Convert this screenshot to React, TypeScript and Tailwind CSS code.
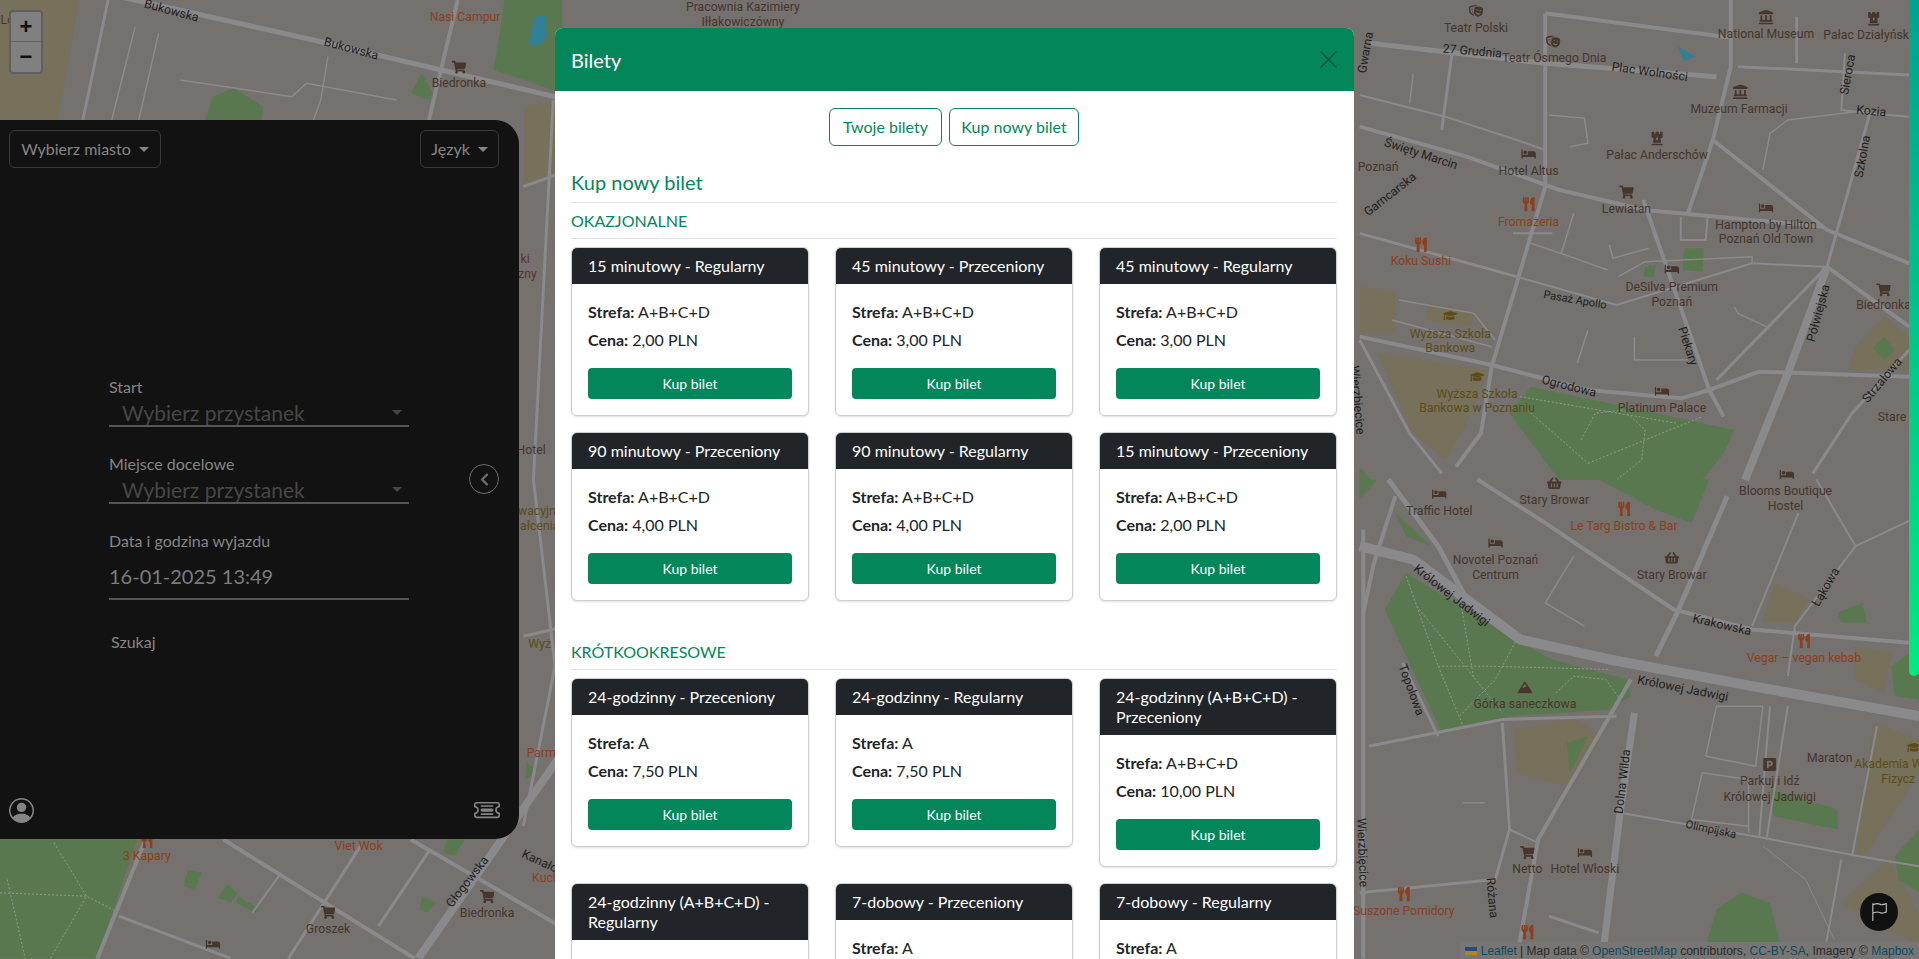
import {
  BsChevronLeft,
  BsFlag,
  BsPersonCircle,
  BsTicketDetailed,
} from "react-icons/bs";
import {
  FaBed,
  FaGraduationCap,
  FaLandmark,
  FaMountain,
  FaShoppingBasket,
  FaShoppingCart,
  FaTheaterMasks,
  FaUtensils,
  FaChessRook,
  FaParking,
} from "react-icons/fa";

const GROUND = "#74716e";
const ROAD = "#8a8a8c";
const PARK = "#5a7850";
const OLIVE = "#77705a";
const BROWN = "#47362c";
const RED = "#8c3f1e";
const MUSTARD = "#5c4d18";

type Layer = {
  transform: string;
  parks: string[];
  zones: string[];
  roads: [string, number][];
  paths?: string[];
};

// coordinates of each layer are read off the zoomed crops of the map
const layers: Layer[] = [
  {
    transform: "translate(1111,0) scale(0.2915,0.2725)",
    parks: [
      "420,1240 480,1160 1050,1290 1020,1360 960,1440 560,1440",
      "910,745 965,745 960,815 905,810",
      "800,800 830,795 825,830 795,830",
      "1470,1010 1500,1050 1470,1080 1440,1045",
      "0,1400 30,1440 0,1440",
    ],
    zones: [
      "0,860 100,880 100,1000 0,1000",
      "190,910 320,940 310,980 190,960",
      "50,1060 360,1110 300,1270 240,1380 150,1300",
      "1370,1110 1390,1040 1470,950 1540,1010 1540,1110",
    ],
    paths: [
      "620,1320 660,1240 740,1230 800,1290 790,1380 720,1440",
      "640,1390 960,1250",
      "450,1190 890,1270",
      "470,1230 640,1390",
    ],
    roads: [
      ["0,380 300,470 560,570 800,630 1100,660 1300,680", 4],
      ["0,700 440,830", 3],
      ["440,830 720,915 1100,790 1300,800", 2],
      ["0,1010 370,1095 640,1170 900,1195 980,1170 1120,1115 1540,1130", 4],
      ["520,40 520,560 440,850 370,1100 340,1300 270,1400", 4],
      ["1040,0 1040,200 990,420 920,640", 4],
      ["520,40 1020,110 1040,110", 4],
      ["1060,200 1540,225", 3],
      ["30,130 520,190 1000,230", 5],
      ["260,150 230,390", 3],
      ["795,600 980,1170 1020,1250", 4],
      ["990,420 1310,690 1540,790", 4],
      ["1310,800 1000,1140", 3],
      ["1310,800 1200,1120 1080,1440", 8],
      ["1430,340 1310,800", 3],
      ["1310,800 1540,980", 4],
      ["1540,1050 1380,1240 1270,1420", 3],
      ["0,1020 140,1300 230,1420", 3],
      ["1225,50 1225,190", 3],
      ["1360,160 1350,330 1430,340 1540,350", 2],
      ["150,220 140,310", 1.5],
      ["0,285 240,350 440,420 520,450", 2],
      ["600,640 565,760", 1.5],
      ["480,730 590,770 695,810", 1.5],
      ["700,735 710,775 810,745", 1.5],
      ["1130,510 1150,400 1200,360 1430,330", 1.5],
      ["430,700 540,700", 2],
      ["770,1010 770,1080 920,1080", 1.5],
      ["640,990 610,1090", 1.5],
      ["530,345 630,355 640,430 590,440", 1.5],
      ["900,650 900,720 970,720 975,650", 2],
      ["725,830 800,785 1100,770 1100,790", 1.5],
      ["110,900 320,940 380,1020", 1.5],
      ["90,960 370,1040", 1.5],
      ["1050,920 1060,940 1140,980", 1.5],
    ],
  },
  {
    transform: "translate(1111,392) scale(0.2915,0.2725)",
    parks: [
      "70,390 130,280 400,460 540,540 750,600 760,650 700,690 420,710 230,760 130,530",
      "670,0 980,0 930,130 830,90",
      "970,1400 1000,1290 1070,1240 1150,1270 1180,1400",
      "1150,930 1340,990 1340,1050 1160,1010",
      "1500,1130 1568,1050 1568,1240 1510,1200",
      "1340,400 1410,370 1420,430 1350,430",
      "100,100 200,200 130,170",
      "580,790 640,770 590,880",
      "1490,560 1568,500 1568,660 1500,650",
      "0,0 50,0 0,60",
    ],
    zones: [
      "430,750 600,720 680,770 590,920 440,880",
      "1160,310 1260,360 1220,430 1130,430",
      "1390,500 1490,520 1470,640 1390,600",
      "1440,730 1568,780 1568,880 1420,1120 1390,1130",
      "1350,1270 1480,1140 1568,1300 1568,1400",
    ],
    paths: [
      "130,290 220,560 290,740",
      "160,380 340,620 400,700",
      "220,560 360,560 700,570",
      "280,350 320,600",
      "280,710 380,600 440,480",
      "550,640 600,590 690,600 730,660",
    ],
    roads: [
      ["0,200 150,240 300,360 450,480 700,540 1100,620 1568,710", 10],
      ["80,0 220,200 300,360", 5],
      ["10,150 10,1437", 4],
      ["100,50 40,250 10,400", 4],
      ["330,0 520,130 880,390 1100,450 1540,490", 4],
      ["1030,50 890,400 830,530", 5],
      ["1280,0 1390,200 1568,110", 2],
      ["1390,200 1220,440 1200,590", 2],
      ["1230,100 1100,440", 2],
      ["770,700 730,1000 680,1437", 7],
      ["760,600 500,1080 440,1437", 4],
      ["25,800 400,720 720,710", 3],
      ["400,730 420,1050 380,1200 0,1240", 3],
      ["420,1050 500,1090", 2],
      ["730,1000 1130,1075 1400,1130 1568,1160", 2],
      ["1350,1140 1300,1437", 2],
      ["1130,1100 1250,1200 1330,1380", 1],
      ["120,550 220,770", 3],
      ["970,830 1000,680 1130,680 1110,860 970,830", 1.5],
      ["960,880 1090,900 1090,1060", 1.5],
      ["960,880 930,1020 1090,1040", 1.5],
      ["1150,680 1120,1070", 2],
      ["1200,680 1140,1080", 2],
      ["530,1310 670,1360", 3],
      ["350,970 290,970", 1.5],
      ["600,230 520,370 630,440", 1.5],
      ["1450,740 1380,1130", 2],
    ],
  },
  {
    transform: "translate(0,0) scale(0.2945,0.2725)",
    parks: [
      "570,360 590,290 650,265 730,320 725,360",
      "1370,210 1400,0 1560,0 1560,280",
      "1140,280 1170,220 1200,280 1190,300",
    ],
    zones: ["0,0 220,0 160,360 0,360", "1455,320 1554,300 1554,510 1455,560"],
    roads: [
      ["290,-20 870,120 1560,295", 5],
      ["300,0 230,360", 3],
      ["1270,0 1190,360", 4],
      ["375,80 310,360", 1.5],
      ["440,100 385,360", 1.5],
      ["500,240 810,290 850,250 1100,300", 1.5],
      ["910,170 890,300 870,360", 1.5],
      ["1452,560 1554,520", 3],
      ["1535,300 1480,1440", 3],
    ],
  },
  {
    transform: "translate(0,392) scale(0.2945,0.2725)",
    parks: [
      "0,1080 380,1080 270,1437 0,1437",
      "520,1170 560,1180 540,1230 510,1220",
      "630,1215 660,1240 640,1270 605,1255",
      "660,1250 720,1290 710,1300 655,1270",
      "1170,1250 1210,1270 1185,1300 1165,1290",
      "1240,1080 1290,1080 1260,1130 1230,1120",
      "1460,850 1490,870 1460,900",
    ],
    zones: ["180,1080 400,1080 340,1200 200,1170"],
    paths: ["150,1090 240,1250 140,1437", "0,1240 240,1250 330,1300", "20,1200 70,1437"],
    roads: [
      ["400,1090 270,1437", 4],
      ["330,1310 640,1437", 3],
      ["620,1080 1150,1437", 4],
      ["1190,1115 1050,1340", 3],
      ["1000,1100 800,1437", 3],
      ["780,1180 700,1300", 2],
      ["1554,830 1160,1437", 8],
      ["1140,1080 1554,1340", 4],
      ["1480,0 1540,560 1452,1040", 3],
      ["1452,470 1554,445", 3],
    ],
  },
];

type Label = [string, number, number, string?, number?, number?];

const labels: Label[] = [
  ["Lo", 6, 20],
  ["Nasi Campur", 380, 17, RED],
  ["Biedronka", 375, 71],
  ["Bukowska", 140, 12, "#1f1f1f", 15],
  ["Bukowska", 287, 43, "#1f1f1f", 15],
  ["Pracownia Kazimiery", 607, 9],
  ["Iłłakowiczówny", 607, 21],
  ["ki", 429, 215, "#5c2f3c"],
  ["zny", 431, 227, "#5c2f3c"],
  ["Hotel", 434, 371],
  ["wacyjny", 441, 421, MUSTARD],
  ["ałcenia", 441, 433, MUSTARD],
  ["Wyż", 441, 530, MUSTARD],
  ["Parma", 445, 619, RED],
  ["Viet Wok", 293, 695, RED],
  ["3 Kapary", 120, 703, RED],
  ["Kanałowa", 447, 710, "#1f1f1f", 25],
  ["Głogowska", 382, 724, "#1f1f1f", -52],
  ["Kuch", 446, 721, RED],
  ["Biedronka", 398, 750],
  ["Groszek", 268, 763],
  ["Gwarna", 1116, 46, "#1f1f1f", -80],
  ["Teatr Polski", 1206, 26],
  ["27 Grudnia", 1203, 45, "#1f1f1f", 5],
  ["Teatr Ósmego Dnia", 1270, 51],
  ["Plac Wolności", 1348, 62, "#1f1f1f", 8],
  ["National Museum", 1443, 31],
  ["Pałac Działyński", 1526, 32],
  ["Muzeum Farmacji", 1421, 92],
  ["Sieroca", 1510, 64, "#1f1f1f", -80],
  ["Kozia", 1529, 94, "#1f1f1f", 5],
  ["Szkolna", 1522, 131, "#1f1f1f", -80],
  ["Pałac Anderschów", 1354, 130],
  ["Hotel Altus", 1249, 143],
  ["Święty Marcin", 1161, 129, "#1f1f1f", 18],
  ["Poznań", 1126, 140],
  ["Garncarska", 1136, 162, "#1f1f1f", -38],
  ["Lewiatan", 1329, 174],
  ["Fromażeria", 1249, 185, RED],
  ["Koku Sushi", 1161, 217, RED],
  ["Hampton by Hilton", 1443, 187],
  ["Poznań Old Town", 1443, 199],
  ["DeSilva Premium", 1366, 238],
  ["Poznań", 1366, 250],
  ["Pasaż Apollo", 1287, 248, "#1f1f1f", 10, 9],
  ["Półwiejska", 1486, 259, "#1f1f1f", -75],
  ["Biedronka", 1539, 253],
  ["Wyższa Szkoła", 1185, 276, MUSTARD],
  ["Bankowa", 1185, 288, MUSTARD],
  ["Wyższa Szkoła", 1207, 325, MUSTARD],
  ["Bankowa w Poznaniu", 1207, 337, MUSTARD],
  ["Ogrodowa", 1282, 319, "#1f1f1f", 14],
  ["Piekary", 1379, 286, "#1f1f1f", 72],
  ["Platinum Palace", 1358, 337],
  ["Strzałowa", 1538, 314, "#1f1f1f", -50],
  ["Stare", 1546, 344],
  ["Stary Browar", 1270, 412],
  ["Blooms Boutique", 1459, 405],
  ["Hostel", 1459, 417],
  ["Traffic Hotel", 1176, 421],
  ["Le Targ Bistro & Bar", 1327, 433, RED],
  ["Novotel Poznań", 1222, 461],
  ["Centrum", 1222, 473],
  ["Stary Browar", 1366, 473],
  ["Królowej Jadwigi", 1186, 490, "#1f1f1f", 38],
  ["Krakowska", 1407, 514, "#1f1f1f", 13],
  ["Łąkowa", 1492, 483, "#1f1f1f", -60],
  ["Vegar – vegan kebab", 1474, 541, RED],
  ["Królowej Jadwigi", 1375, 566, "#1f1f1f", 11],
  ["Topolowa", 1153, 567, "#1f1f1f", 70],
  ["Górka saneczkowa", 1246, 579],
  ["Dolna Wilda", 1326, 642, "#1f1f1f", -83],
  ["Olimpijska", 1398, 681, "#1f1f1f", 12, 9],
  ["Maraton", 1495, 623],
  ["Akademia W", 1543, 628, MUSTARD],
  ["Fizycz", 1551, 640, MUSTARD],
  ["Parkuj i Idź", 1446, 642],
  ["Królowej Jadwigi", 1446, 655],
  ["Netto", 1248, 714],
  ["Hotel Włoski", 1295, 714],
  ["Suszone Pomidory", 1147, 748, RED],
  ["Różana", 1219, 737, "#1f1f1f", 85],
  ["Wierzbięcice", 1109, 330, "#1f1f1f", 85],
  ["Wierzbięcice", 1113, 700, "#1f1f1f", 88],
];

type Poi = [typeof FaBed, number, number, string, number?];

const pois: Poi[] = [
  [FaShoppingCart, 375, 55, BROWN],
  [FaShoppingCart, 398, 733, BROWN],
  [FaShoppingCart, 268, 746, BROWN],
  [FaUtensils, 120, 688, RED, 11],
  [FaBed, 174, 772, BROWN],
  [FaTheaterMasks, 1206, 9, BROWN],
  [FaTheaterMasks, 1269, 34, BROWN],
  [FaLandmark, 1443, 14, BROWN],
  [FaChessRook, 1531, 15, BROWN],
  [FaLandmark, 1422, 75, BROWN],
  [FaChessRook, 1354, 113, BROWN],
  [FaBed, 1249, 126, BROWN],
  [FaShoppingCart, 1329, 157, BROWN],
  [FaUtensils, 1249, 167, RED],
  [FaUtensils, 1161, 200, RED],
  [FaBed, 1443, 170, BROWN],
  [FaBed, 1366, 220, BROWN],
  [FaShoppingCart, 1539, 237, BROWN],
  [FaGraduationCap, 1185, 258, MUSTARD],
  [FaGraduationCap, 1207, 308, MUSTARD],
  [FaBed, 1358, 320, BROWN],
  [FaBed, 1460, 388, BROWN],
  [FaShoppingBasket, 1270, 395, BROWN],
  [FaBed, 1176, 404, BROWN],
  [FaUtensils, 1327, 416, RED],
  [FaBed, 1222, 444, BROWN],
  [FaShoppingBasket, 1366, 456, BROWN],
  [FaUtensils, 1474, 524, RED],
  [FaMountain, 1246, 562, BROWN],
  [FaParking, 1446, 625, BROWN],
  [FaShoppingCart, 1248, 697, BROWN],
  [FaBed, 1295, 697, BROWN],
  [FaUtensils, 1147, 731, RED],
  [FaUtensils, 1248, 762, RED],
  [FaGraduationCap, 1564, 611, MUSTARD],
];

function MapLayer() {
  return (
    <svg
      className="absolute inset-0 h-full w-full"
      viewBox="0 0 1568 784"
      preserveAspectRatio="none"
    >
      <rect width="1568" height="784" fill={GROUND} />
      {layers.map((layer) => (
        <g key={layer.transform} transform={layer.transform}>
          {layer.zones.map((p) => (
            <polygon key={p} points={p} fill={OLIVE} />
          ))}
          {layer.parks.map((p) => (
            <polygon key={p} points={p} fill={PARK} />
          ))}
          {layer.paths?.map((p) => (
            <polyline
              key={p}
              points={p}
              fill="none"
              stroke="#8f9a8c"
              strokeWidth={1}
              strokeDasharray="2 2"
              vectorEffect="non-scaling-stroke"
            />
          ))}
          {layer.roads.map(([p, w]) => (
            <polyline
              key={p}
              points={p}
              fill="none"
              stroke={ROAD}
              strokeWidth={w}
              strokeLinejoin="round"
              vectorEffect="non-scaling-stroke"
            />
          ))}
        </g>
      ))}
      <polygon points="1371,38 1378,42 1385,46 1376,50" fill="#2f8098" />
      <polygon points="437,14 445,12 447,30 438,38 432,36" fill="#2f8098" />
      {pois.map(([Icon, x, y, color, size], i) => (
        <Icon
          key={i}
          x={x - (size ?? 12) / 2}
          y={y - (size ?? 12) / 2}
          size={size ?? 12}
          color={color}
        />
      ))}
      {labels.map(([text, x, y, color, angle, size], i) => (
        <text
          key={i}
          x={x}
          y={y}
          fill={color ?? BROWN}
          fontSize={size ?? 10}
          textAnchor="middle"
          fontFamily="Roboto, sans-serif"
          transform={angle ? `rotate(${angle} ${x} ${y - 3})` : undefined}
        >
          {text}
        </text>
      ))}
    </svg>
  );
}

function Caret({ className }: { className: string }) {
  return (
    <span
      className={`inline-block h-0 w-0 border-x-[5px] border-t-[5px] border-x-transparent ${className}`}
    />
  );
}

function StopSelect() {
  return (
    <div className="flex h-[28px] items-center justify-between border-b-2 border-[#565656] pl-[13px] pr-[7px] text-[21px] leading-[25px] text-[#474747]">
      <span>Wybierz przystanek</span>
      <Caret className="border-t-[#474747]" />
    </div>
  );
}

function SidePanel() {
  return (
    <aside className="absolute left-0 top-[120px] flex h-[719px] w-[519px] flex-col rounded-r-[24px] bg-[#121212] text-[#858585]">
      <div className="flex items-start justify-between pl-[9px] pr-[20px] pt-[10px]">
        <button className="flex h-[38px] w-[152px] items-center justify-center gap-2 rounded-md border border-[#373b3e]">
          Wybierz miasto
          <Caret className="border-t-[#858585]" />
        </button>
        <button className="flex h-[38px] w-[79px] items-center justify-center gap-2 rounded-md border border-[#373b3e]">
          Język
          <Caret className="border-t-[#858585]" />
        </button>
      </div>

      <div className="ml-[109px] mt-[207px] w-[300px]">
        <label className="block">Start</label>
        <StopSelect />
        <label className="mt-[25px] block">Miejsce docelowe</label>
        <StopSelect />
        <label className="mt-[25px] block">Data i godzina wyjazdu</label>
        <div className="flex h-[47px] items-center border-b-2 border-[#565656] text-[20px] text-[#7c7c7c]">
          16-01-2025 13:49
        </div>
        <button className="ml-[2px] mt-[30px] block">Szukaj</button>
      </div>

      <div className="mt-auto flex items-center justify-between pb-[16px] pl-[9px] pr-[19px]">
        <BsPersonCircle size={25} />
        <BsTicketDetailed size={26} />
      </div>

      <button className="absolute left-[469px] top-[344px] flex h-[30px] w-[30px] items-center justify-center rounded-full border border-[#6a6a6a] text-[#6a6a6a]">
        <BsChevronLeft size={13} strokeWidth={2} />
      </button>
    </aside>
  );
}

type Ticket = { name: string; zone: string; price?: string };

const occasional: Ticket[] = [
  { name: "15 minutowy - Regularny", zone: "A+B+C+D", price: "2,00 PLN" },
  { name: "45 minutowy - Przeceniony", zone: "A+B+C+D", price: "3,00 PLN" },
  { name: "45 minutowy - Regularny", zone: "A+B+C+D", price: "3,00 PLN" },
  { name: "90 minutowy - Przeceniony", zone: "A+B+C+D", price: "4,00 PLN" },
  { name: "90 minutowy - Regularny", zone: "A+B+C+D", price: "4,00 PLN" },
  { name: "15 minutowy - Przeceniony", zone: "A+B+C+D", price: "2,00 PLN" },
];

const shortTerm: Ticket[] = [
  { name: "24-godzinny - Przeceniony", zone: "A", price: "7,50 PLN" },
  { name: "24-godzinny - Regularny", zone: "A", price: "7,50 PLN" },
  { name: "24-godzinny (A+B+C+D) - Przeceniony", zone: "A+B+C+D", price: "10,00 PLN" },
  { name: "24-godzinny (A+B+C+D) - Regularny", zone: "A+B+C+D" },
  { name: "7-dobowy - Przeceniony", zone: "A" },
  { name: "7-dobowy - Regularny", zone: "A" },
];

function TicketCard({ ticket }: { ticket: Ticket }) {
  return (
    <div className="mb-[16px] overflow-hidden rounded-md border border-[#cfcfcf] bg-white shadow-sm">
      <div className="bg-[#212529] px-4 py-2 text-[16px] leading-[20px] text-white">
        {ticket.name}
      </div>
      <div className="p-4 text-[#212529]">
        <p>
          <b className="font-bold">Strefa:</b> {ticket.zone}
        </p>
        {ticket.price && (
          <p className="mt-1">
            <b className="font-bold">Cena:</b> {ticket.price}
          </p>
        )}
        <button className="mt-4 block h-[31px] w-full rounded bg-[#03875a] text-[14px] text-white">
          Kup bilet
        </button>
      </div>
    </div>
  );
}

function TicketSection({ title, tickets }: { title: string; tickets: Ticket[] }) {
  return (
    <section>
      <h6 className="border-b border-[#dee2e6] pb-[5px] text-[16px] leading-[24px] text-[#03875a]">
        {title}
      </h6>
      <div className="mt-[8px] grid grid-cols-3 items-start gap-x-[26px]">
        {tickets.map((t) => (
          <TicketCard key={t.name} ticket={t} />
        ))}
      </div>
    </section>
  );
}

function TicketsModal() {
  return (
    <div className="absolute left-[555px] top-[28px] w-[799px] rounded-t-lg bg-white">
      <div className="flex h-[63px] items-center justify-between rounded-t-lg bg-[#03875a] pl-4 pr-[16px] text-white">
        <h5 className="text-[20px]">Bilety</h5>
        <svg width="17" height="17" viewBox="0 0 16 16" stroke="#025437" strokeWidth="1.3" className="mr-[1px]">
          <path d="M0.5 0.5 15.5 15.5M15.5 0.5 0.5 15.5" />
        </svg>
      </div>
      <div className="pl-4 pr-[17px] pt-[17px]">
        <div className="flex justify-center gap-[7px]">
          <button className="h-[38px] w-[113px] rounded-md border border-[#03875a] text-[#03875a]">
            Twoje bilety
          </button>
          <button className="h-[38px] w-[130px] rounded-md border border-[#03875a] text-[#03875a]">
            Kup nowy bilet
          </button>
        </div>
        <h5 className="mt-[21px] border-b border-[#dee2e6] pb-[5px] text-[20px] leading-[30px] text-[#03875a]">
          Kup nowy bilet
        </h5>
        <div className="mt-[6px]">
          <TicketSection title="OKAZJONALNE" tickets={occasional} />
        </div>
        <div className="mt-[23px]">
          <TicketSection title="KRÓTKOOKRESOWE" tickets={shortTerm} />
        </div>
      </div>
    </div>
  );
}

export default function App() {
  return (
    <div className="relative h-screen w-full overflow-hidden font-['Lato',sans-serif] text-[16px]">
      <MapLayer />

      <div className="absolute left-[9px] top-[10px] flex w-[34px] flex-col overflow-hidden rounded border-2 border-[#5f5f5f] bg-[#808080] text-center font-['Liberation_Sans',sans-serif] text-[22px] font-bold leading-[30px] text-[#111]">
        <span className="h-[30px] border-b border-[#666]">+</span>
        <span className="h-[30px]">−</span>
      </div>

      <SidePanel />

      <div className="absolute right-0 top-0 h-[676px] w-[10px] rounded-b-[8px] bg-gradient-to-b from-[#00a38c] to-[#00ea80]" />

      <button className="absolute left-[1860px] top-[893px] flex h-[38px] w-[38px] items-center justify-center rounded-full bg-[#111] text-[#bdbdbd]">
        <BsFlag size={18} />
      </button>

      <div className="absolute bottom-0 right-0 flex h-[17px] items-center whitespace-pre bg-[#777674] px-[5px] font-['Liberation_Sans',sans-serif] text-[12px] text-[#2a2a2a]">
        <span className="mr-1 inline-block h-[8px] w-[12px] bg-gradient-to-b from-[#244a80] from-50% to-[#a88a1e] to-50%" />
        <span className="text-[#0d4a5e]">Leaflet</span>
        <span> | Map data © </span>
        <span className="text-[#0d4a5e]">OpenStreetMap</span>
        <span> contributors, </span>
        <span className="text-[#0d4a5e]">CC-BY-SA</span>
        <span>, Imagery © </span>
        <span className="text-[#0d4a5e]">Mapbox</span>
      </div>

      <TicketsModal />
    </div>
  );
}
